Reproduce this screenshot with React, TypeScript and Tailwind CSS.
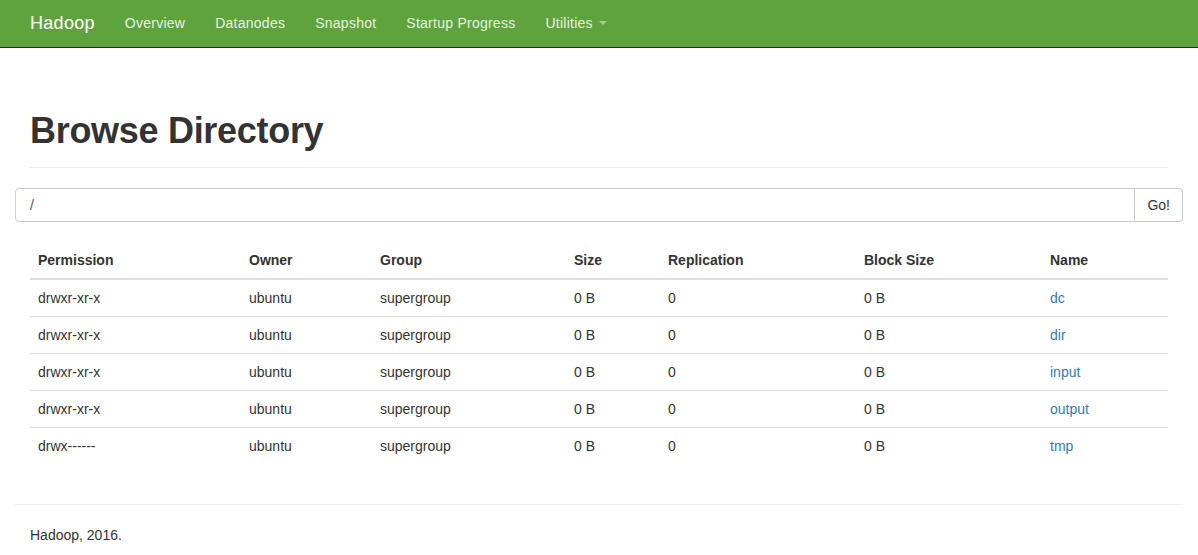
import React from 'react';

const NAV_LINKS = ['Overview', 'Datanodes', 'Snapshot', 'Startup Progress'];

const FILES = [
  { perm: 'drwxr-xr-x', owner: 'ubuntu', group: 'supergroup', size: '0 B', repl: '0', block: '0 B', name: 'dc' },
  { perm: 'drwxr-xr-x', owner: 'ubuntu', group: 'supergroup', size: '0 B', repl: '0', block: '0 B', name: 'dir' },
  { perm: 'drwxr-xr-x', owner: 'ubuntu', group: 'supergroup', size: '0 B', repl: '0', block: '0 B', name: 'input' },
  { perm: 'drwxr-xr-x', owner: 'ubuntu', group: 'supergroup', size: '0 B', repl: '0', block: '0 B', name: 'output' },
  { perm: 'drwx------', owner: 'ubuntu', group: 'supergroup', size: '0 B', repl: '0', block: '0 B', name: 'tmp' },
];

const Navbar = () => (
  <nav className="h-[48px] bg-[#5fa33e] border-b border-[#1f2a18] flex items-center px-[30px] pb-[2px]">
    <a className="text-[18px] text-white mr-[15px] leading-[20px] tracking-[0.3px]">Hadoop</a>
    {NAV_LINKS.map((l) => (
      <a key={l} className="px-[15px] text-[14px] text-[#e8f2e1] leading-[20px] tracking-[0.25px]">
        {l}
      </a>
    ))}
    <a className="px-[15px] text-[14px] text-[#e8f2e1] leading-[20px] tracking-[0.25px] flex items-center">
      Utilities
      <span className="ml-[6px] inline-block w-0 h-0 border-x-[4px] border-x-transparent border-t-[4px] border-t-[#a9c99a]" />
    </a>
  </nav>
);

const App = () => {
  return (
    <div className="min-h-screen bg-white text-[#333] text-[14px] font-['Liberation_Sans',Arial,sans-serif]">
      <Navbar />
      <div className="px-[15px]">
        <div className="mx-[15px] mt-[63px] pb-[16px] border-b border-[#eee]">
          <h1 className="text-[36px] font-bold leading-[40px] tracking-[-0.3px]">Browse Directory</h1>
        </div>

        <div className="mt-[20px] flex h-[34px]">
          <input
            className="flex-1 border border-[#ccc] rounded-l-[4px] px-[14px] text-[14px] text-[#555] outline-none"
            defaultValue="/"
          />
          <button className="border border-l-0 border-[#ccc] rounded-r-[4px] bg-white px-[12px] text-[14px] text-[#333]">
            Go!
          </button>
        </div>

        <div className="mx-[15px] mt-[20px]">
          <table className="w-full border-collapse text-left">
            <thead>
              <tr className="border-b-2 border-[#ddd]">
                <th className="w-[211px] p-[8px] font-bold leading-[20px]">Permission</th>
                <th className="w-[131px] p-[8px] font-bold leading-[20px]">Owner</th>
                <th className="w-[194px] p-[8px] font-bold leading-[20px]">Group</th>
                <th className="w-[94px] p-[8px] font-bold leading-[20px]">Size</th>
                <th className="w-[196px] p-[8px] font-bold leading-[20px]">Replication</th>
                <th className="w-[186px] p-[8px] font-bold leading-[20px]">Block Size</th>
                <th className="p-[8px] font-bold leading-[20px]">Name</th>
              </tr>
            </thead>
            <tbody>
              {FILES.map((f, i) => (
                <tr key={f.name} className={i < FILES.length - 1 ? 'border-b border-[#ddd]' : ''}>
                  <td className="p-[8px] leading-[20px]">{f.perm}</td>
                  <td className="p-[8px] leading-[20px]">{f.owner}</td>
                  <td className="p-[8px] leading-[20px]">{f.group}</td>
                  <td className="p-[8px] leading-[20px]">{f.size}</td>
                  <td className="p-[8px] leading-[20px]">{f.repl}</td>
                  <td className="p-[8px] leading-[20px]">{f.block}</td>
                  <td className="p-[8px] leading-[20px]">
                    <a className="text-[#337ab7]">{f.name}</a>
                  </td>
                </tr>
              ))}
            </tbody>
          </table>
        </div>

        <hr className="mt-[40px] border-t border-[#eee]" />
        <p className="mx-[15px] mt-[20px] pb-[10px] leading-[20px]">Hadoop, 2016.</p>
      </div>
    </div>
  );
};

export default App;
